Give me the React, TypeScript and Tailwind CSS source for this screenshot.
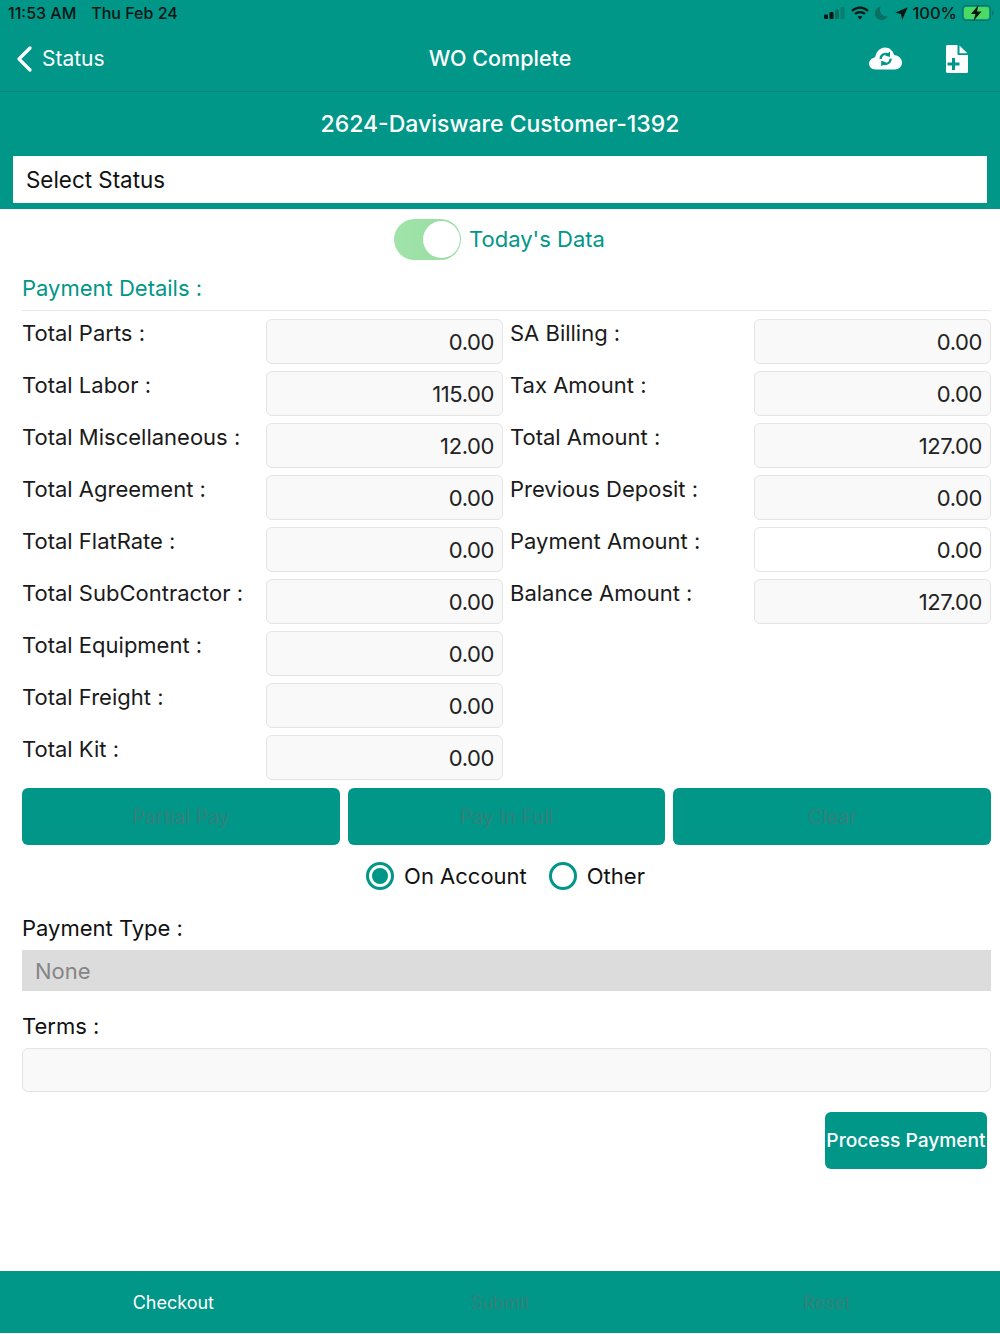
const leftRows = [
  ['Total Parts :', '0.00'],
  ['Total Labor :', '115.00'],
  ['Total Miscellaneous :', '12.00'],
  ['Total Agreement :', '0.00'],
  ['Total FlatRate :', '0.00'],
  ['Total SubContractor :', '0.00'],
  ['Total Equipment :', '0.00'],
  ['Total Freight :', '0.00'],
  ['Total Kit :', '0.00'],
]

const rightRows = [
  ['SA Billing :', '0.00', false],
  ['Tax Amount :', '0.00', false],
  ['Total Amount :', '127.00', false],
  ['Previous Deposit :', '0.00', false],
  ['Payment Amount :', '0.00', true],
  ['Balance Amount :', '127.00', false],
] as const

function AmountRow({ label, value, white }: { label: string; value: string; white?: boolean }) {
  return (
    <div className="flex h-[45px] items-start">
      <div className="w-[244px] shrink-0 text-[22px] leading-[28px] text-[#1a1a1a]">{label}</div>
      <div
        className={`flex h-[45px] w-[237px] shrink-0 items-center justify-end rounded-md border border-[#e4e4e4] pr-2 pt-[2px] text-[22px] tracking-[-0.4px] text-[#222] ${
          white ? 'bg-white' : 'bg-[#f9f9f9]'
        }`}
      >
        {value}
      </div>
    </div>
  )
}

function StatusIcons() {
  return (
    <div className="flex items-center text-[#0c1512]">
      <svg width="22" height="12" viewBox="0 0 22 12" className="mr-[5px]">
        <rect x="0" y="7.5" width="4" height="4.5" rx="1" fill="#0c1512" />
        <rect x="5.5" y="5" width="4" height="7" rx="1" fill="#0c1512" />
        <rect x="11" y="2.5" width="4" height="9.5" rx="1" fill="#0b6f61" />
        <rect x="16.5" y="0" width="4" height="12" rx="1" fill="#0b7f6f" />
      </svg>
      <svg width="18" height="14" viewBox="0 0 18 14" className="mr-[6px]" fill="none" stroke="#0c1512" strokeWidth="2.2">
        <path d="M1 5 C5.5 0.6 12.5 0.6 17 5" />
        <path d="M4 8 C6.8 5.4 11.2 5.4 14 8" />
        <path d="M9 13.5 L6.6 10.8 C8 9.6 10 9.6 11.4 10.8 Z" fill="#0c1512" stroke="none" />
      </svg>
      <svg width="13" height="14" viewBox="0 0 13 14" className="mr-[7px]">
        <path d="M6 0.5 A6.8 6.8 0 1 0 12.8 10.2 A6.4 6.4 0 0 1 6 0.5 Z" fill="#0b6f61" />
      </svg>
      <svg width="13" height="13" viewBox="0 0 13 13" className="mr-[4px]">
        <path d="M12.8 0.2 L7.2 12.8 L6 7 L0.2 5.8 Z" fill="#0c1512" />
      </svg>
      <span className="mr-[5px] text-[16.5px] leading-none">100%</span>
      <svg width="32" height="16" viewBox="0 0 32 16">
        <rect x="0.5" y="0.5" width="28" height="15" rx="3.5" fill="none" stroke="#0b6f61" />
        <rect x="2" y="2" width="25" height="12" rx="2" fill="#4cd964" />
        <path d="M30 5.5 C31.2 6 31.5 7 31.5 8 C31.5 9 31.2 10 30 10.5 Z" fill="#0b6f61" />
        <path d="M16.5 0 L9 9 H13.5 L11.5 16 L19.5 6.5 H15 Z" fill="#0c1512" />
      </svg>
    </div>
  )
}

function CloudSyncIcon() {
  return (
    <svg width="33" height="23" viewBox="0 0 33 23">
      <path
        d="M6.5 22.5 C2.5 22.5 0 19.8 0 16.6 C0 13.8 1.8 11.6 4.4 11 C5.2 10.6 6 10.2 6.4 9.2 C7.6 4 11.4 0.4 16 0.4 C20.4 0.4 23.6 3.2 24.8 7.2 C25 7.8 25.4 8.1 26 8.2 C30 8.8 33 11.6 33 15.6 C33 19.6 29.8 22.5 26 22.5 Z"
        fill="#fff"
      />
      <g fill="none" stroke="#009688" strokeWidth="2.2">
        <path d="M11.6 12 A5.2 5.2 0 0 1 19.2 7.4" />
        <path d="M21.6 11.6 A5.2 5.2 0 0 1 14 16.4" />
      </g>
      <path d="M21 4.4 L21 10 L16 8.6 Z" fill="#009688" />
      <path d="M12.2 19.4 L12.2 13.8 L17.2 15.2 Z" fill="#009688" />
    </svg>
  )
}

function FilePlusIcon() {
  return (
    <svg width="22" height="28" viewBox="0 0 22 28">
      <path d="M1.5 0 H11.5 V9 Q11.5 10 12.5 10 H22 V26.5 Q22 28 20.5 28 H1.5 Q0 28 0 26.5 V1.5 Q0 0 1.5 0 Z" fill="#fff" />
      <path d="M13.5 0.6 L21.4 8.2 H13.5 Z" fill="#fff" />
      <path d="M6 13 H9 V17.5 H13.5 V20.5 H9 V25 H6 V20.5 H1.5 V17.5 H6 Z" fill="#009688" />
    </svg>
  )
}

export default function App() {
  return (
    <div className="flex h-[1334px] w-[1000px] flex-col bg-white font-['Inter',sans-serif]">
      {/* Top bar */}
      <div className="bg-[#009688]">
        <div className="flex h-[26px] items-center justify-between pl-2 pr-[6px] text-[16px] font-medium text-[#0c1512]">
          <div className="flex gap-[15px]">
            <span>11:53 AM</span>
            <span>Thu Feb 24</span>
          </div>
          <StatusIcons />
        </div>
        <div className="relative flex h-[66px] items-center justify-between border-b border-[#0b8578]">
          <div className="flex items-center pl-[16px] text-white">
            <svg width="16" height="26" viewBox="0 0 16 26" fill="none" stroke="#fff" strokeWidth="3.2" strokeLinecap="round" strokeLinejoin="round">
              <path d="M14 2 L3 13 L14 24" />
            </svg>
            <span className="ml-[10px] text-[21px]">Status</span>
          </div>
          <div className="absolute inset-x-0 text-center text-[21.5px] font-medium text-white">WO Complete</div>
          <div className="mr-[32px] flex items-center gap-[44px]">
            <CloudSyncIcon />
            <FilePlusIcon />
          </div>
        </div>
        <div className="flex h-[64px] items-center justify-center text-[23px] font-medium text-white">
          2624-Davisware Customer-1392
        </div>
        <div className="px-[13px] pb-[6px]">
          <div className="flex h-[47px] items-center bg-white pl-[13px] pt-[1px] text-[22.4px] text-[#111]">Select Status</div>
        </div>
      </div>

      {/* Today's data toggle */}
      <div className="flex h-[60px] items-center justify-center pr-[1px]">
        <div className="flex h-[41px] w-[67px] items-center justify-end rounded-full bg-linear-to-r from-[#a0e4aa] to-[#98dca3] pr-[1px]">
          <div className="h-[37px] w-[37px] rounded-full bg-white" />
        </div>
        <span className="ml-[8px] text-[22px] text-[#009688]">Today's Data</span>
      </div>

      <div className="px-[22px] pr-[9px]">
        <div className="flex h-[42px] items-center border-b border-[#e6e6e6] pb-[2px] text-[22px] text-[#009688]">
          Payment Details :
        </div>

        {/* Amounts */}
        <div className="mt-[8px] flex gap-[8px]">
          <div className="flex flex-col gap-[7px]">
            {leftRows.map(([label, value]) => (
              <AmountRow key={label} label={label} value={value} />
            ))}
          </div>
          <div className="-ml-px flex flex-col gap-[7px]">
            {rightRows.map(([label, value, white]) => (
              <AmountRow key={label} label={label} value={value} white={white} />
            ))}
          </div>
        </div>

        {/* Payment buttons */}
        <div className="mt-[8px] grid grid-cols-3 gap-[8px]">
          {['Partial Pay', 'Pay In Full', 'Clear'].map((label) => (
            <div
              key={label}
              className="flex h-[57px] items-center justify-center rounded-md bg-[#009688] pt-[2px] text-[19.5px] text-[#35807a]"
            >
              {label}
            </div>
          ))}
        </div>

        {/* Radios */}
        <div className="mt-[17px] flex h-[28px] items-center justify-center pr-[2px] text-[22px] text-[#111]">
          <div className="flex h-[28px] w-[28px] items-center justify-center rounded-full border-[3px] border-[#009688]">
            <div className="h-[16px] w-[16px] rounded-full bg-[#009688]" />
          </div>
          <span className="ml-[10px]">On Account</span>
          <div className="ml-[22px] h-[28px] w-[28px] rounded-full border-[3px] border-[#009688]" />
          <span className="ml-[10px]">Other</span>
        </div>

        {/* Payment type and terms */}
        <div className="mt-[24px] h-[36px] text-[22px] leading-[28px] text-[#111]">Payment Type :</div>
        <div className="flex h-[41px] items-center bg-[#dcdcdc] pl-[13px] pt-[1px] text-[22px] text-[#858585]">None</div>
        <div className="mt-[20px] h-[37px] text-[22px] leading-[30px] text-[#111]">Terms :</div>
        <div className="h-[44px] rounded-md border border-[#e4e4e4] bg-[#f9f9f9]" />

        <div className="mt-[20px] flex justify-end pr-[4px]">
          <div className="flex h-[57px] w-[162px] items-center justify-center rounded-md bg-[#009688] text-[19.2px] font-medium whitespace-nowrap text-white">
            Process Payment
          </div>
        </div>
      </div>

      {/* Footer */}
      <div className="mt-auto mb-px grid h-[62px] grid-cols-3 bg-[#009688] px-[10px] text-[18px]">
        <div className="flex items-center justify-center text-white">Checkout</div>
        <div className="flex items-center justify-center text-[#35807a]">Submit</div>
        <div className="flex items-center justify-center text-[#35807a]">Reset</div>
      </div>
    </div>
  )
}
